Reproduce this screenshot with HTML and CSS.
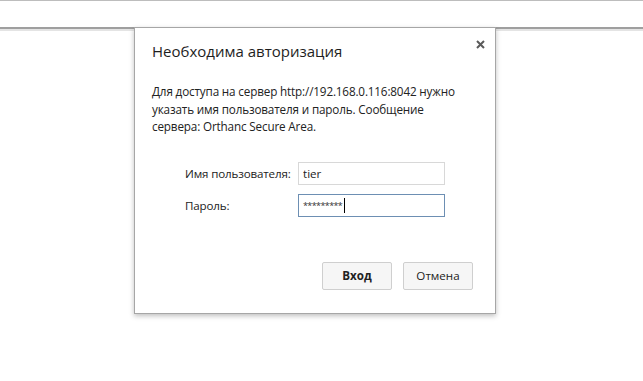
FILE: index.html
```html
<!DOCTYPE html>
<html lang="ru">
<head>
    <meta charset="UTF-8">
    <title>Необходима авторизация</title>
    <link rel="stylesheet" href="styles.css">
</head>
<body>
    <div class="top-bar"></div>
    <div class="page-line"></div>

    <div class="dialog">
        <div class="dialog-head">
            <div class="dialog-title">Необходима авторизация</div>
            <div class="close-button">
                <svg width="9" height="9" viewBox="0 0 9 9">
                    <path d="M1 1 L8 8 M8 1 L1 8" stroke="#5a5a5a" stroke-width="2"/>
                </svg>
            </div>
        </div>

        <p class="message">
            Для доступа на сервер http://192.168.0.116:8042 нужно указать имя пользователя и пароль. Сообщение сервера: Orthanc Secure Area.
        </p>

        <div class="form">
            <div class="form-row">
                <label for="user">Имя пользователя:</label>
                <input type="text" id="user" value="tier">
            </div>
            <div class="form-row">
                <label for="pass">Пароль:</label>
                <div class="input focused">*********<span class="caret"></span></div>
            </div>
        </div>

        <div class="buttons">
            <button class="btn btn-primary">Вход</button>
            <button class="btn">Отмена</button>
        </div>
    </div>
</body>
</html>
```

FILE: styles.css
```css
* {
    margin: 0;
    padding: 0;
    box-sizing: border-box;
}

body {
    font-family: 'Open Sans', 'Noto Sans', sans-serif;
    background: #ffffff;
    color: #222222;
    width: 643px;
    height: 381px;
    overflow: hidden;
    position: relative;
}

.top-bar {
    height: 27px;
    border-top: 1px solid #bdbdbd;
}

.page-line {
    height: 4px;
    border-top: 2px solid #9f9f9f;
    background: #e4e4e4;
}

.dialog {
    position: absolute;
    left: 134px;
    top: 27px;
    width: 362px;
    height: 287px;
    background: #ffffff;
    border: 1px solid #a6a6a6;
    box-shadow: 0 2px 5px rgba(0, 0, 0, 0.25);
    padding: 0 17px 0 17px;
}

.dialog-head {
    display: flex;
    justify-content: space-between;
    align-items: flex-start;
    padding-top: 12px;
}

.dialog-title {
    font-size: 15px;
    color: #1e1e1e;
    line-height: 22px;
}

.close-button {
    margin-right: -7px;
    width: 9px;
    height: 9px;
    line-height: 0;
}

.message {
    margin-top: 21px;
    font-size: 11.7px;
    line-height: 17.5px;
    color: #222222;
    letter-spacing: -0.15px;
    width: 322px;
}

.form {
    margin-top: 26px;
    padding-left: 33px;
    display: flex;
    flex-direction: column;
    gap: 9px;
}

.form-row {
    display: flex;
    align-items: center;
}

.form-row label {
    width: 113px;
    font-size: 11.6px;
    color: #222222;
    letter-spacing: -0.15px;
}

.form-row input,
.input {
    width: 147px;
    height: 23px;
    border: 1px solid #d8d8d8;
    font-family: inherit;
    font-size: 11.6px;
    color: #222222;
    padding: 0 4px;
    outline: none;
    background: #ffffff;
}

.input {
    display: flex;
    align-items: center;
    font-size: 9px;
    letter-spacing: -0.6px;
    color: #333333;
}

.input.focused {
    border-color: #6d8fb3;
}

.caret {
    display: inline-block;
    width: 1px;
    height: 15px;
    background: #000000;
    margin-left: 2px;
}

.buttons {
    display: flex;
    justify-content: flex-end;
    gap: 11px;
    margin-top: 45px;
    margin-right: 5px;
}

.btn {
    width: 70px;
    height: 28px;
    font-family: inherit;
    font-size: 11.6px;
    color: #222222;
    background: #f6f6f6;
    border: 1px solid #cfcfcf;
    border-radius: 2px;
}

.btn-primary {
    font-weight: 700;
}
```
